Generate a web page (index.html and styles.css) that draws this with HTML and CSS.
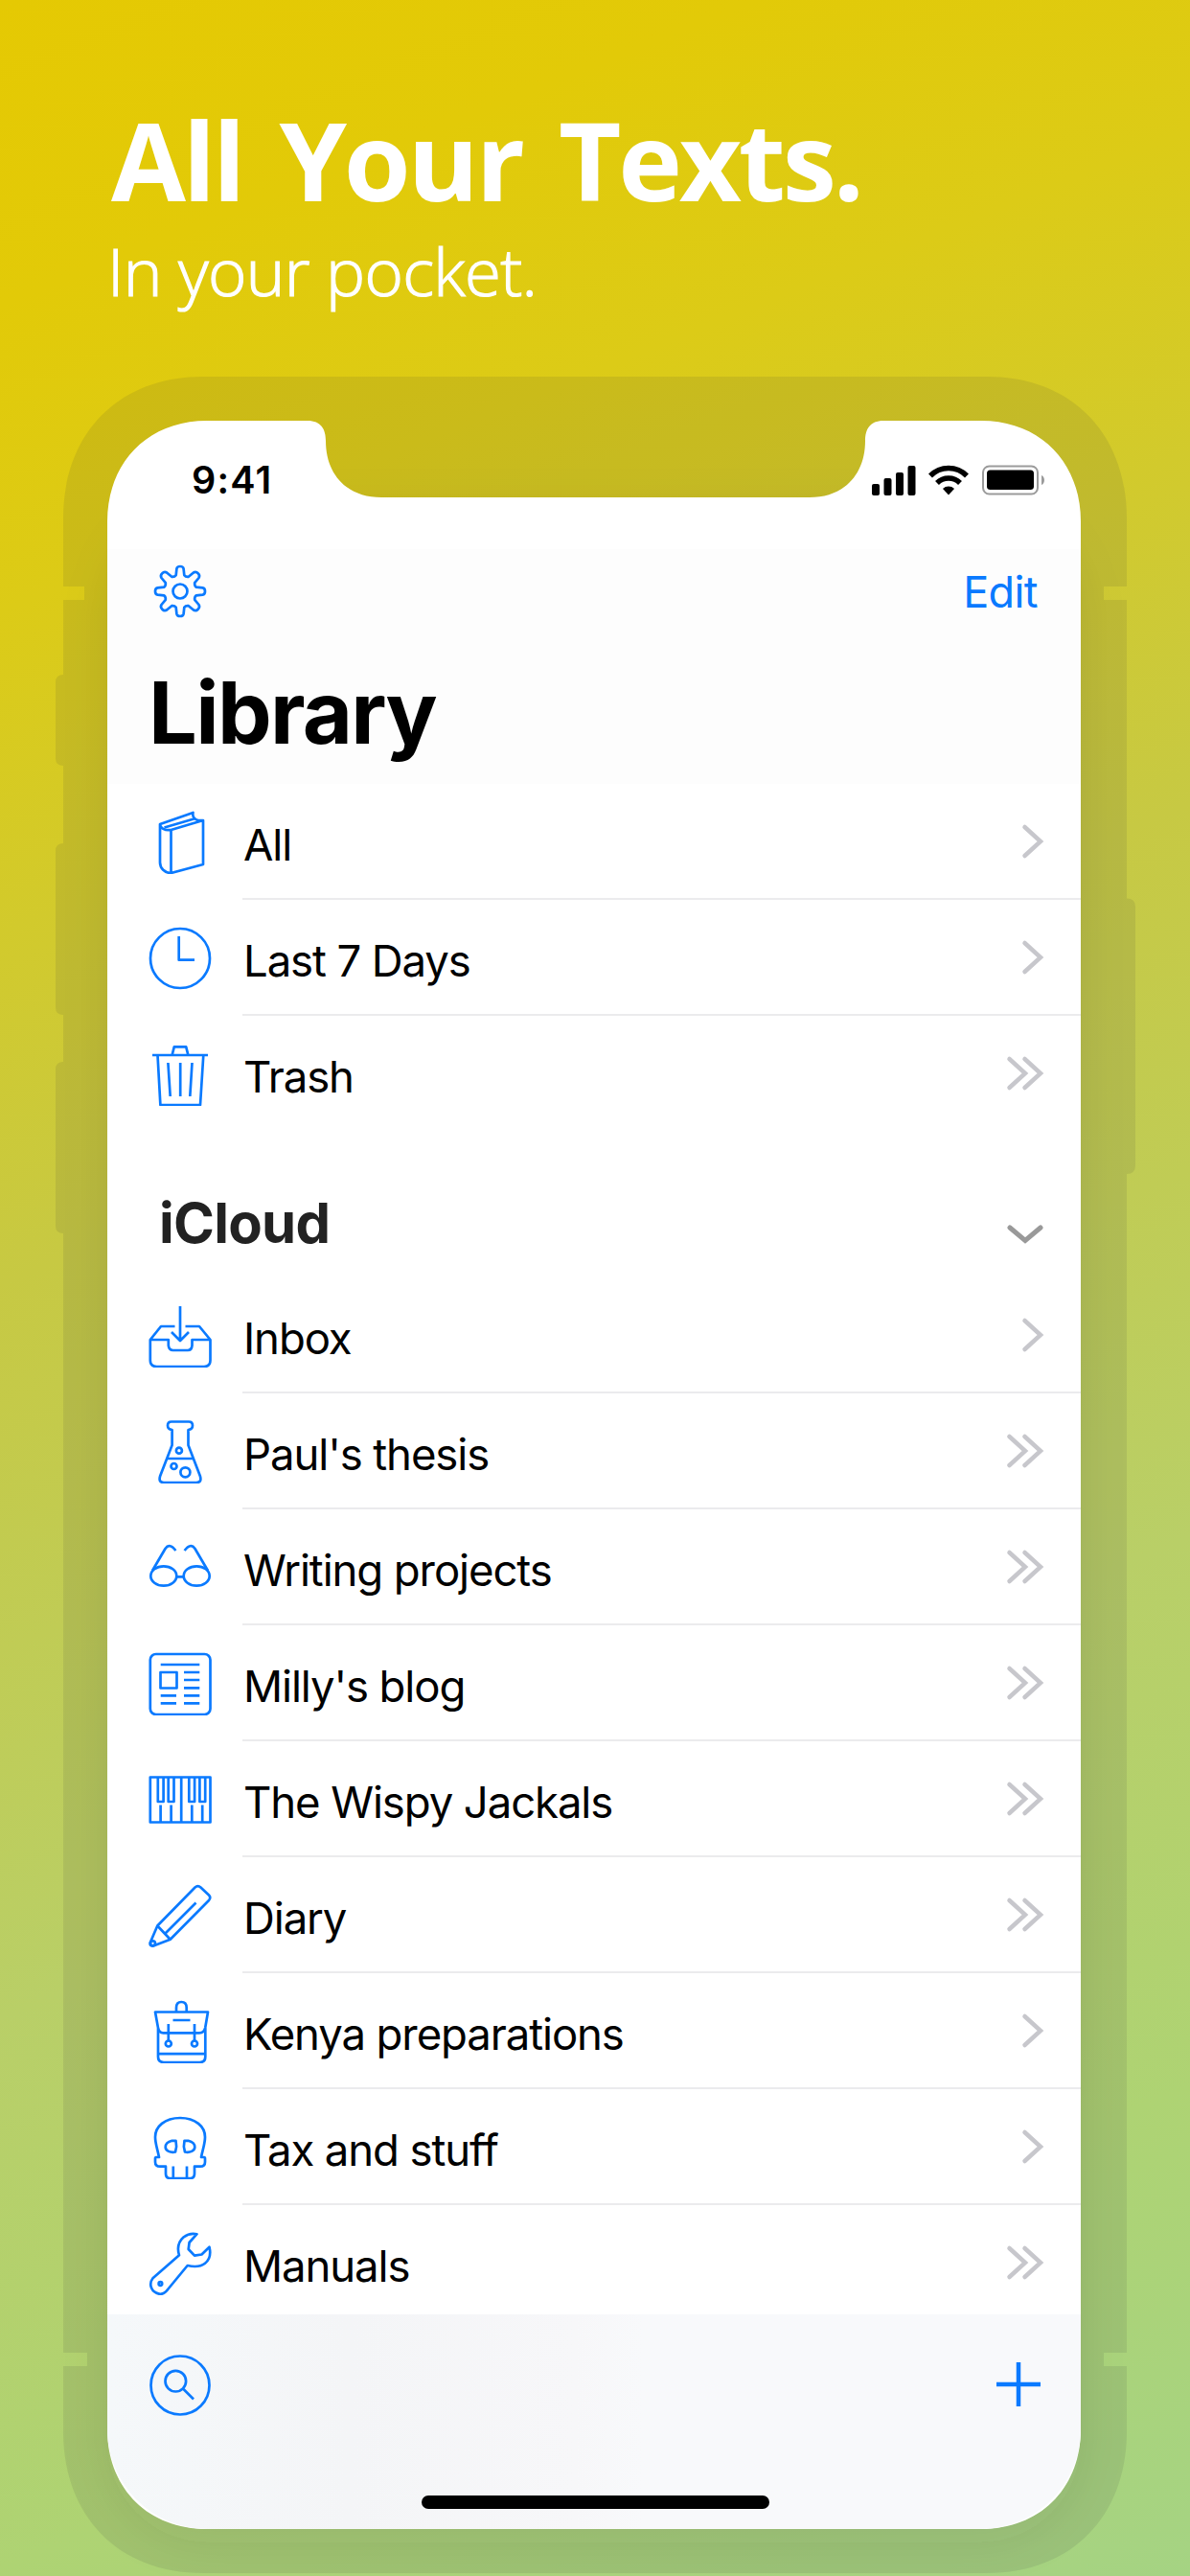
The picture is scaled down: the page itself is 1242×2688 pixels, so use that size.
FILE: index.html
```html
<!DOCTYPE html>
<html lang="en">
<head>
    <meta charset="UTF-8">
    <meta name="viewport" content="width=device-width, initial-scale=1.0">
    <title>All Your Texts.</title>
    <link rel="stylesheet" href="styles.css">
</head>
<body>
    <!-- shared arrow shapes -->
    <svg class="defs" width="0" height="0">
        <symbol id="single" viewBox="0 0 40 38"><path d="M19.5 4L36 19L19.5 34"/></symbol>
        <symbol id="double" viewBox="0 0 40 38"><path d="M3.5 4L20 19L3.5 34M19.5 4L36 19L19.5 34"/></symbol>
    </svg>

    <div id="container">
        <header class="intro">
            <h1>All Your Texts.</h1>
            <p>In your pocket.</p>
        </header>

        <div class="phone">
            <svg class="frame" viewBox="0 0 1242 2300" width="1242" height="2300">
                <defs>
                    <filter id="soft" x="-20%" y="-10%" width="140%" height="120%"><feGaussianBlur stdDeviation="24"/></filter>
                </defs>
                <path fill="#2d2d38" fill-opacity=".1" d="M212 5H1030C1120 5 1176 66 1176 153V224H1152V238H1176V549.500Q1185 549.500 1185 558V828Q1185 837 1176 837V2067H1152V2081H1176V2149C1176 2236 1120 2297 1030 2297H212C122 2297 66 2236 66 2149V2081H91V2067H66V899Q58 899 58 891V728Q58 720 66 720V671Q58 671 58 663V500Q58 492 66 492V411Q58 411 58 403V324Q58 316 66 316V238H88V224H66V153C66 66 122 5 212 5Z"/>
                <rect x="112" y="145" width="1016" height="2120" rx="104" fill="#333" fill-opacity=".08" filter="url(#soft)"/>
                <path fill="#fff" d="M216 51H321C335 51 340 60 340 72C340 107 362 131 398 131H845C881 131 903 107 903 72C903 60 908 51 922 51H1024C1087 51 1128 96 1128 156V2147C1128 2207 1087 2251 1024 2251H216C153 2251 112 2207 112 2147V156C112 96 153 51 216 51Z"/>
            </svg>

            <div class="screen">
                <div class="status">
                    <span class="time">9:41</span>
                    <svg class="signal" width="182" height="34" viewBox="0 0 182 34">
                        <rect x="1" y="21" width="8" height="12" rx="2"/>
                        <rect x="13.500" y="15" width="8" height="18" rx="2"/>
                        <rect x="26" y="9" width="8" height="24" rx="2"/>
                        <rect x="38.500" y="2" width="8" height="31" rx="2"/>
                        <g fill="none" stroke="#000" stroke-width="5.500">
                            <path d="M62 12.500A26.500 26.500 0 0 1 100 12.500"/>
                            <path d="M69 20A17 17 0 0 1 93 20"/>
                        </g>
                        <path d="M75 26A8.500 8.500 0 0 1 87 26L81 32.500Z"/>
                        <rect x="117" y="2.500" width="57" height="29" rx="6.500" fill="none" stroke="#9b9b9b" stroke-width="2"/>
                        <rect x="121" y="6.500" width="49" height="20.500" rx="3.500"/>
                        <path d="M178 12C182 13.500 182 20.500 178 22Z" fill="#9b9b9b"/>
                    </svg>
                </div>

                <div class="navbar">
                    <svg class="icon" viewBox="0 0 66 66">
                        <circle cx="33" cy="33" r="7.500"/>
                        <path d="M28.700 16.200L29.400 9.500Q29.800 7 33 7Q36.200 7 36.600 9.500L37.300 16.200Q38.800 18.200 41.800 17.800L47 13.500Q49.500 12 51.700 14.300Q54 16.500 52.500 19L48.200 24.200Q47.800 27.200 49.800 28.700L56.500 29.400Q59 29.800 59 33Q59 36.200 56.500 36.600L49.800 37.300Q47.800 38.800 48.200 41.800L52.500 47Q54 49.500 51.700 51.700Q49.500 54 47 52.500L41.800 48.200Q38.800 47.800 37.300 49.800L36.600 56.500Q36.200 59 33 59Q29.800 59 29.400 56.500L28.700 49.800Q27.200 47.800 24.200 48.200L19 52.500Q16.500 54 14.300 51.700Q12 49.500 13.500 47L17.800 41.800Q18.200 38.800 16.200 37.300L9.500 36.600Q7 36.200 7 33Q7 29.800 9.500 29.400L16.200 28.700Q18.200 27.200 17.800 24.200L13.500 19Q12 16.500 14.300 14.300Q16.500 12 19 13.500L24.200 17.800Q27.200 18.200 28.700 16.200Z"/>
                    </svg>
                    <a class="edit">Edit</a>
                </div>
                <h2 class="title">Library</h2>

                <ul class="list">
                    <li>
                        <svg class="icon" viewBox="0 0 66 66"><path d="M12 14L46.500 2C45.500 6 48 9.500 52 10H57V56L23.500 65C17 65 12 60 12 54ZM12 14C12 18 17 21 23.500 20L57 10M23.500 20V65M16.500 17.500L49 8"/></svg>
                        <div class="row"><span>All</span><svg class="arrow"><use href="#single"/></svg></div>
                    </li>
                    <li>
                        <svg class="icon" viewBox="0 0 66 66"><circle cx="33" cy="33" r="31"/><path d="M31.700 10V34.700H48"/></svg>
                        <div class="row"><span>Last 7 Days</span><svg class="arrow"><use href="#single"/></svg></div>
                    </li>
                    <li>
                        <svg class="icon" viewBox="0 0 66 66"><path d="M4 13H62M24.600 13L26.800 4.300H39.200L41.400 13M9.500 13L12.400 65H54L57.300 13M20.400 21L22.700 56M33.200 21V56M45.500 21L43.300 56"/></svg>
                        <div class="row last"><span>Trash</span><svg class="arrow"><use href="#double"/></svg></div>
                    </li>
                </ul>

                <div class="section">
                    <h3>iCloud</h3>
                    <svg width="42" height="24" viewBox="0 0 42 24"><path d="M5 3L21 16.500L37 3"/></svg>
                </div>

                <ul class="list folders">
                    <li>
                        <svg class="icon" viewBox="0 0 66 66"><path d="M33 2V37.500M24 29L33 38L42 29M27.500 23H13L1.800 37V58.500Q1.800 65 8.500 65H58Q64.500 65 64.500 58.500V37L53 23H38.500M1.800 37H20.800V43Q21.500 48 25.500 48H41Q45 48 45.500 43V37H64.500"/></svg>
                        <div class="row"><span>Inbox</span><svg class="arrow"><use href="#single"/></svg></div>
                    </li>
                    <li>
                        <svg class="icon" viewBox="0 0 66 66"><path d="M24.600 10Q20 9.500 20 5.500Q20 1.500 24 1.500H42Q46 1.500 46 5.500Q46 9.500 41.500 10V26L53.800 58Q56 65 50 65H16Q10 65 12.200 58L24.600 26ZM19.500 40H46.800"/><circle cx="31.900" cy="31.700" r="3"/><circle cx="26.500" cy="48" r="3"/><circle cx="38.400" cy="54.300" r="5"/></svg>
                        <div class="row"><span>Paul's thesis</span><svg class="arrow"><use href="#double"/></svg></div>
                    </li>
                    <li>
                        <svg class="icon" viewBox="0 0 66 66"><ellipse cx="15.800" cy="41.500" rx="13.500" ry="10.200"/><ellipse cx="50.200" cy="41.500" rx="13.500" ry="10.200"/><path d="M29.300 42.300H36.700M4 36L17.500 13Q22 6.500 28.400 15M62 36L48.500 13Q44 6.500 37.600 15"/></svg>
                        <div class="row"><span>Writing projects</span><svg class="arrow"><use href="#double"/></svg></div>
                    </li>
                    <li>
                        <svg class="icon" viewBox="0 0 66 66"><rect x="1.800" y="2" width="62.700" height="63" rx="6"/><rect x="12.500" y="21" width="17" height="16.500"/><path d="M12.700 13H53.300M37 21H53.300M37 29H53.300M37 37.300H53.300M37 45.300H53.300M37 53.300H53.300M12.700 45.300H29M12.700 53.300H29"/></svg>
                        <div class="row"><span>Milly's blog</span><svg class="arrow"><use href="#double"/></svg></div>
                    </li>
                    <li>
                        <svg class="icon" viewBox="0 0 66 66"><path d="M1.800 9.500H64.500V56.500H1.800ZM34.200 9.500V56.500M9.800 9.500V35H15.600V9.500M20.700 9.500V35H26.500V9.500M42.300 9.500V35H48.100V9.500M53.400 9.500V35H59.200V9.500M12.600 38.500V56.500M23.600 38.500V56.500M45.300 38.500V56.500M56.200 38.500V56.500"/></svg>
                        <div class="row"><span>The Wispy Jackals</span><svg class="arrow"><use href="#double"/></svg></div>
                    </li>
                    <li>
                        <svg class="icon" viewBox="0 0 66 66"><path d="M9.300 43.500L48.500 3.500Q51.500 0.800 54.500 3.500L63 11.500Q65.500 14 63 17L22.700 57.700L5 64.500Q1 65 1.800 61ZM9.300 43.500L22.700 57.700M17.500 51.500L49.500 19.500"/><circle cx="4.500" cy="61.800" r="2.500"/></svg>
                        <div class="row"><span>Diary</span><svg class="arrow"><use href="#double"/></svg></div>
                    </li>
                    <li>
                        <svg class="icon" viewBox="0 0 66 66"><path d="M29 12V8Q29 2 34.300 2Q39.700 2 39.700 8V12M7 12.500H62L59.200 29Q58 34.300 53 34.300H15.500Q11 34.300 10 29ZM10 29V59Q10 65 16 65H53.500Q59.300 65 59.300 59V29M10 56.200H59.300M25.500 21H43.500M20.800 25V42.300M48 25V42.300"/><circle cx="20.800" cy="45.500" r="3"/><circle cx="48" cy="45.500" r="3"/></svg>
                        <div class="row"><span>Kenya preparations</span><svg class="arrow"><use href="#single"/></svg></div>
                    </li>
                    <li>
                        <svg class="icon" viewBox="0 0 66 66"><path d="M33 2C17 2 7 11 7 22C7 29 9.500 35 11 43H8Q7 43 7 44.500V48Q7 52.700 12 52.700H18V60Q18 65 22.500 65H43.500Q48 65 48 60V52.700H54Q59 52.700 59 48V44.500Q59 43 58 43H55C56.500 35 59 29 59 22C59 11 49 2 33 2ZM25.800 52.500V65M40 52.500V65"/><path d="M28.500 25.800H24.500C20 27 17.700 29.500 17.700 32.500C17.700 36.500 23 38.500 28 37.500C29.500 33 29.500 30 28.500 25.800ZM37.500 25.800H41.500C46 27 48.300 29.500 48.300 32.500C48.300 36.500 43 38.500 38 37.500C36.500 33 36.500 30 37.500 25.800Z"/></svg>
                        <div class="row"><span>Tax and stuff</span><svg class="arrow"><use href="#single"/></svg></div>
                    </li>
                    <li>
                        <svg class="icon" viewBox="0 0 66 66"><path d="M50.500 2.200L42.600 11L41.700 18L48 24.700L55.500 23.500L63.500 15.700C65.500 24 63 29.500 59 32.700C53.500 37 47 36.500 40.700 35L20.500 59.500C17 64.500 12.500 66 8 63.500C2 60.500 0.500 53.500 4.500 48.300L32 24.300C29.500 16 32 9.500 36.500 5.500C41 2 46 1.200 50.500 2.200Z"/><circle cx="12.400" cy="54" r="1.800"/></svg>
                        <div class="row last"><span>Manuals</span><svg class="arrow"><use href="#double"/></svg></div>
                    </li>
                </ul>

                <div class="toolbar">
                    <div class="tools">
                        <svg class="icon" viewBox="0 0 66 66"><circle cx="33" cy="33" r="30.500"/><circle cx="28.300" cy="28.700" r="10.800"/><path d="M36 36.500L47 47.500"/></svg>
                        <svg class="plus" width="48" height="48" viewBox="0 0 48 48"><path d="M24 1V47M1 24H47"/></svg>
                    </div>
                    <div class="home"></div>
                </div>
            </div>
        </div>
    </div>
</body>
</html>
```
FILE: styles.css
```css
* {
    box-sizing: border-box;
}
body {
    margin: 0;
    font-family: Inter, "Liberation Sans", sans-serif;
    color: #000;
}
h1, h2, h3, p, ul {
    margin: 0;
    padding: 0;
}
svg {
    display: block;
}
.defs {
    position: absolute;
}
#container {
    width: 1242px;
    height: 2688px;
    overflow: hidden;
    background: linear-gradient(158deg, #e5c903 0%, #e2ca08 10%, #dccb17 20%, #c7c943 42%, #b9cf67 66%, #aed373 84%, #a5d383 100%);
}

/* headline */
.intro {
    height: 388px;
    padding: 98px 0 0 116px;
    color: #fff;
    font-family: "Open Sans", sans-serif;
    white-space: nowrap;
}
.intro h1 {
    font-size: 113px;
    line-height: 136px;
    font-weight: 700;
    letter-spacing: -3.2px;
    word-spacing: 12px;
}
.intro p {
    margin-left: -4px;
    font-size: 69px;
    line-height: 96px;
    font-weight: 300;
    letter-spacing: -0.7px;
    -webkit-text-stroke: 1.2px #fff;
}

/* device */
.phone {
    position: relative;
    height: 2300px;
    padding: 51px 114px 0 112px;
}
.frame {
    position: absolute;
    left: 0;
    top: 0;
}
.screen {
    position: relative;
    height: 2200px;
    display: flex;
    flex-direction: column;
}
.status {
    height: 134px;
    padding: 45px 37px 0 88px;
    display: flex;
    justify-content: space-between;
}
.time {
    font-size: 39.5px;
    line-height: 34px;
    font-weight: 600;
    letter-spacing: 1.2px;
}
.navbar {
    height: 88px;
    padding: 11px 45px 0 43px;
    display: flex;
    justify-content: space-between;
    background: #fdfdfd;
}
.icon {
    width: 66px;
    height: 66px;
    flex: none;
    fill: none;
    stroke: #0a7aff;
    stroke-width: 2.7;
    stroke-linejoin: round;
}
.edit {
    font-size: 45px;
    line-height: 67px;
    letter-spacing: -0.6px;
    color: #0a7aff;
}
.title {
    height: 157px;
    padding: 28px 0 0 43px;
    font-size: 90px;
    line-height: 110px;
    font-weight: 700;
    letter-spacing: -1.7px;
    background: #fdfdfd;
}

/* rows */
.list {
    list-style: none;
}
.list li {
    display: flex;
    height: 121px;
    padding-left: 43px;
}
.list .icon {
    margin: 28px 32px 0 0;
}
.row {
    flex: 1;
    display: flex;
    justify-content: space-between;
    padding: 5px 38px 0 1px;
    font-size: 45.5px;
    line-height: 117px;
    letter-spacing: -1.1px;
    border-bottom: 2px solid #ebebed;
    white-space: nowrap;
}
.row.last {
    border-bottom: none;
}
.arrow {
    width: 40px;
    height: 38px;
    margin-top: 36px;
    fill: none;
    stroke: #c7c7cc;
    stroke-width: 4.5;
    stroke-linecap: round;
}
.section {
    height: 152px;
    padding: 60px 37px 0 54px;
    display: flex;
    justify-content: space-between;
}
.section h3 {
    font-size: 58px;
    line-height: 70px;
    font-weight: 700;
    letter-spacing: -0.7px;
    color: #222;
}
.section svg {
    margin-top: 37px;
    fill: none;
    stroke: #999;
    stroke-width: 5;
    stroke-linecap: round;
}
.folders {
    height: 1082px;
    overflow: hidden;
}

/* bottom bar */
.toolbar {
    flex: 1;
    padding: 41px 41px 0 43px;
    border-radius: 0 0 104px 104px;
    background: linear-gradient(90deg, #f5f8fa 0%, #f4f5f7 25%, #f7f7f9 48%, #f8f9fb 55%, #f8f9fb 100%);
}
.tools {
    display: flex;
    justify-content: space-between;
}
.plus {
    margin-top: 8px;
    stroke: #0a7aff;
    stroke-width: 4.5;
}
.home {
    width: 363px;
    height: 14px;
    margin: 82px auto 0;
    border-radius: 7px;
    background: #000;
}
```
